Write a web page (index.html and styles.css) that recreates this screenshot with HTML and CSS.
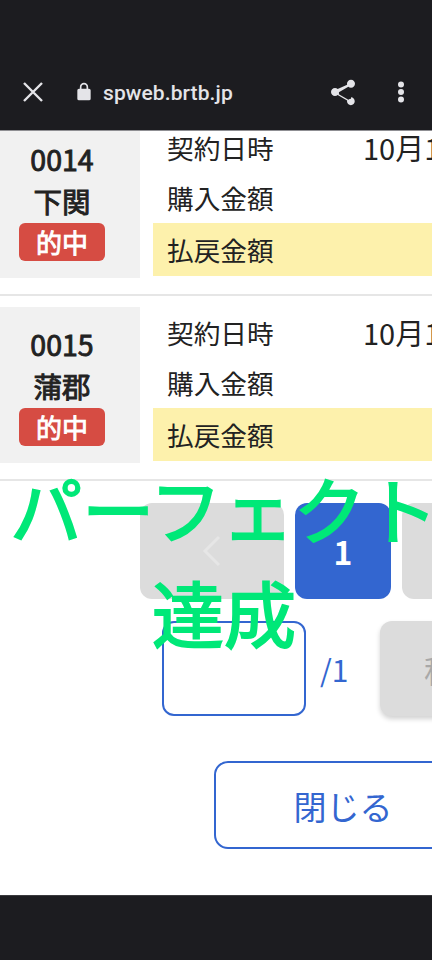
FILE: index.html
```html
<!DOCTYPE html>
<html lang="ja">
<head>
<meta charset="utf-8">
<title>spweb.brtb.jp</title>
<link rel="stylesheet" href="styles.css">
</head>
<body>
<div class="screen">
  <header class="browser-bar">
    <svg class="icon-close" viewBox="0 0 24 24" width="24" height="24"><path d="M3 3 21 21M21 3 3 21" fill="none" stroke="currentColor" stroke-width="2.400"/></svg>
    <svg class="icon-lock" viewBox="0 0 24 24" width="24" height="24"><path d="M18 8h-1V6A5 5 0 0 0 7 6v2H6a2 2 0 0 0-2 2v10a2 2 0 0 0 2 2h12a2 2 0 0 0 2-2V10a2 2 0 0 0-2-2zM9 8V6a3 3 0 0 1 6 0v2H9z" fill="currentColor"/></svg>
    <span class="url">spweb.brtb.jp</span>
    <svg class="icon-share" viewBox="0 0 24 24" width="32" height="32"><path d="M18 16.100c-.8 0-1.400.3-2 .8l-7.100-4.200c.1-.2.1-.5.1-.7s0-.5-.1-.7L16 7.200c.5.5 1.200.8 2 .8 1.700 0 3-1.300 3-3s-1.300-3-3-3-3 1.300-3 3c0 .2 0 .5.100.7L8 8.900C7.500 8.400 6.800 8.100 6 8.100c-1.700 0-3 1.300-3 3s1.300 3 3 3c.8 0 1.500-.3 2-.8l7.100 4.200c-.1.200-.1.400-.1.600 0 1.600 1.300 2.900 2.900 2.900s2.900-1.300 2.900-2.900-1.200-3-2.800-3z" fill="currentColor" transform="translate(0 .9)"/></svg>
    <svg class="icon-more" viewBox="0 0 24 24" width="24" height="24"><circle cx="12" cy="4.500" r="3" fill="currentColor"/><circle cx="12" cy="12" r="3" fill="currentColor"/><circle cx="12" cy="19.500" r="3" fill="currentColor"/></svg>
  </header>

  <main class="content">
    <div class="results">
      <section class="race">
        <div class="race-id">
          <div class="race-no">0014</div>
          <div class="race-place">下関</div>
          <div class="badge">的中</div>
        </div>
        <div class="race-info">
          <div class="info-row"><span class="info-label">契約日時</span><span class="info-value">10月1</span></div>
          <div class="info-row"><span class="info-label">購入金額</span></div>
          <div class="info-row info-row-hit"><span class="info-label">払戻金額</span></div>
        </div>
      </section>
      <section class="race">
        <div class="race-id">
          <div class="race-no">0015</div>
          <div class="race-place">蒲郡</div>
          <div class="badge">的中</div>
        </div>
        <div class="race-info">
          <div class="info-row"><span class="info-label">契約日時</span><span class="info-value">10月1</span></div>
          <div class="info-row"><span class="info-label">購入金額</span></div>
          <div class="info-row info-row-hit"><span class="info-label">払戻金額</span></div>
        </div>
      </section>
    </div>

    <nav class="pager">
      <div class="page-btn page-prev">
        <svg viewBox="0 0 24 34" width="24" height="34"><path d="M19 3 5 17 19 31" fill="none" stroke="#e6e6e6" stroke-width="3"/></svg>
      </div>
      <div class="page-btn page-current">1</div>
      <div class="page-btn page-next"></div>
    </nav>

    <div class="jump">
      <div class="jump-input"></div>
      <span class="jump-total">/1</span>
      <div class="jump-btn">移動</div>
    </div>

    <div class="close-btn">閉じる</div>

    <div class="celebration">パーフェクト達成</div>
  </main>

  <footer class="system-bar"></footer>
</div>
</body>
</html>
```

FILE: styles.css
```css
* { box-sizing: border-box; }

html, body {
  margin: 0;
  padding: 0;
  background: #1c1c20;
}

.screen {
  width: 432px;
  height: 960px;
  overflow: hidden;
  display: flex;
  flex-direction: column;
  font-family: "Noto Sans CJK JP", "Noto Sans", sans-serif;
  color: #222;
}

.browser-bar {
  flex: 0 0 131px;
  display: flex;
  align-items: center;
  padding: 53px 0 0 21px;
  background: #1c1c20;
  border-bottom: 1px solid #8f8f93;
  color: #e4e4e8;
}

.icon-lock {
  width: 20px;
  height: 20px;
  margin-left: 29px;
}

.url {
  margin: 2px 0 0 9px;
  font-family: Roboto, sans-serif;
  font-size: 21px;
  font-weight: 500;
  letter-spacing: 0.1px;
}

.icon-share { margin-left: 94px; }
.icon-more { margin-left: 30px; }

.content {
  position: relative;
  flex: 1;
  overflow: hidden;
  background: #fff;
}

.results { margin-top: -9px; }

.race {
  display: flex;
  padding-bottom: 16px;
  border-bottom: 2px solid #e6e6e6;
  margin-bottom: 11px;
}

.race-id {
  flex: 0 0 140px;
  height: 156px;
  padding: 16px 16px 0 0;
  display: flex;
  flex-direction: column;
  align-items: center;
  background: #f1f1f1;
}

.race-no, .race-place {
  font-size: 28.5px;
  font-weight: 400;
  -webkit-text-stroke: 0.9px currentColor;
  line-height: 42px;
}

.badge {
  flex: none;
  width: 86px;
  height: 38px;
  margin-top: 1px;
  border-radius: 6px;
  background: #d64c43;
  color: #fff;
  font-size: 26px;
  font-weight: 400;
  -webkit-text-stroke: 0.9px currentColor;
  line-height: 37px;
  text-align: center;
}

.race-info {
  flex: 1;
  margin-left: 13px;
  display: grid;
  grid-template-rows: 50px 51px 53px;
  align-content: start;
  font-size: 26.67px;
}

.info-row {
  display: flex;
  align-items: center;
  padding-left: 14px;
  white-space: nowrap;
}

.info-row-hit { background: #fdf1ac; }

.info-label { flex: 0 0 196px; }

.info-value { font-size: 29px; }

.pager {
  display: flex;
  gap: 11px;
  margin: 22px 0 0 140px;
}

.page-btn {
  flex: 0 0 96px;
  height: 96px;
  display: flex;
  align-items: center;
  justify-content: center;
  border-radius: 12px;
  background: #dcdcdc;
}

.page-prev { flex-basis: 144px; }

.page-current {
  background: #3366d0;
  color: #fff;
  font-size: 32px;
  font-weight: 700;
}

.jump {
  display: flex;
  align-items: center;
  margin: 22px 0 0 162px;
}

.jump-input {
  flex: 0 0 144px;
  height: 95px;
  border: 2px solid #3366d0;
  border-radius: 12px;
  background: #fff;
}

.jump-total {
  flex: 0 0 74px;
  padding-left: 14px;
  color: #3366d0;
  font-size: 30px;
}

.jump-btn {
  flex: 0 0 auto;
  height: 95px;
  padding: 0 44px;
  display: flex;
  align-items: center;
  border-radius: 12px;
  background: #dcdcdc;
  box-shadow: 0 3px 5px rgba(0, 0, 0, 0.18);
  color: #a8a8a8;
  font-size: 32px;
  white-space: nowrap;
}

.close-btn {
  width: 258px;
  height: 88px;
  margin: 45px 0 0 214px;
  padding-top: 2px;
  display: flex;
  align-items: center;
  justify-content: center;
  border: 2px solid #3366d0;
  border-radius: 14px;
  background: #fff;
  color: #3366d0;
  font-size: 33px;
}

.celebration {
  position: absolute;
  top: 324px;
  left: 8px;
  width: 432px;
  color: #00e878;
  font-size: 72px;
  font-weight: 400;
  -webkit-text-stroke: 2px currentColor;
  line-height: 104px;
  text-align: center;
}

.system-bar {
  flex: 0 0 65px;
  background: #1c1c20;
  border-top: 1px solid #3a3a3e;
}
```
